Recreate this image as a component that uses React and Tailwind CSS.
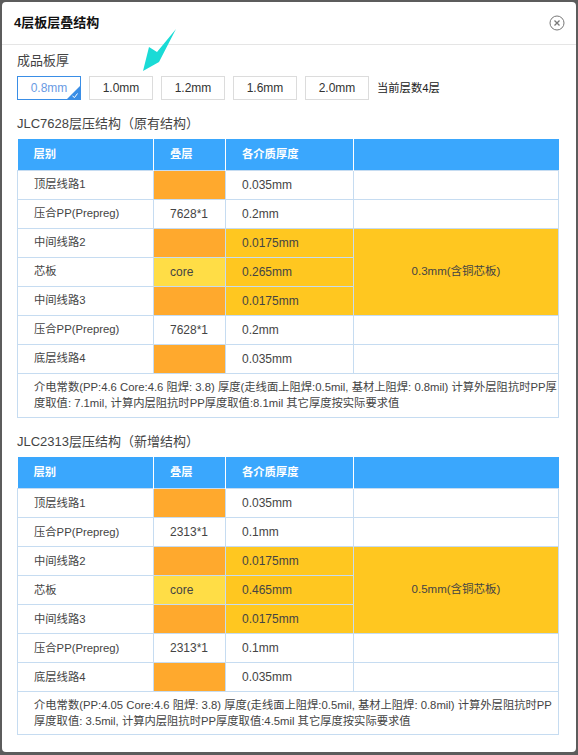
function Stack({ pp, core, total, thin, note, headHeight, notePadding }) {
  const label = "border border-[#c6dcf1] pl-[16px] h-[29px] p-0 text-[11.3px]";
  const td = "border border-[#c6dcf1] pl-[16px] h-[29px] p-0";
  const orange = "border border-[#c6dcf1] h-[29px] p-0 bg-[#ffa92d]";
  const gold = "border border-[#c6dcf1] pl-[16px] h-[29px] p-0 bg-[#ffc720]";
  return (
    <table className="w-[541px] table-fixed border-collapse text-[12px] text-[#444] ml-[17px]">
      <colgroup>
        <col className="w-[136px]" />
        <col className="w-[72px]" />
        <col className="w-[128px]" />
        <col className="w-[205px]" />
      </colgroup>
      <thead>
        <tr className={`bg-[#3aa7fd] text-white text-[11.3px] ${headHeight}`}>
          <th className="text-left pl-[16px] p-0 border-r border-white font-bold">层别</th>
          <th className="text-left pl-[16px] p-0 border-r border-white font-bold">叠层</th>
          <th className="text-left pl-[16px] p-0 border-r border-white font-bold">各介质厚度</th>
          <th className="p-0"></th>
        </tr>
      </thead>
      <tbody>
        <tr><td className={label}>顶层线路1</td><td className={orange}></td><td className={td}>0.035mm</td><td className={td}></td></tr>
        <tr><td className={label}>压合PP(Prepreg)</td><td className={td}>{pp}</td><td className={td}>{thin}</td><td className={td}></td></tr>
        <tr>
          <td className={label}>中间线路2</td><td className={orange}></td><td className={gold}>0.0175mm</td>
          <td rowSpan={3} className="border border-[#c6dcf1] p-0 bg-[#ffc720] text-center text-[11.5px]">{total}</td>
        </tr>
        <tr><td className={label}>芯板</td><td className={`${td} bg-[#ffdd46]`}>core</td><td className={gold}>{core}</td></tr>
        <tr><td className={label}>中间线路3</td><td className={orange}></td><td className={gold}>0.0175mm</td></tr>
        <tr><td className={label}>压合PP(Prepreg)</td><td className={td}>{pp}</td><td className={td}>{thin}</td><td className={td}></td></tr>
        <tr><td className={label}>底层线路4</td><td className={orange}></td><td className={td}>0.035mm</td><td className={td}></td></tr>
        <tr>
          <td colSpan={4} className={`border border-[#c6dcf1] pl-[16px] pr-0 pt-[5px] leading-[16px] text-[11.3px] ${notePadding}`}>{note}</td>
        </tr>
      </tbody>
    </table>
  );
}

function Thick({ label, active }) {
  return (
    <button className={`relative w-[64px] h-[24px] border text-[12px] bg-white overflow-hidden ${active ? "border-[#3a8ee6] text-[#6a9be3]" : "border-[#dcdcdc] text-[#333]"}`}>
      {label}
      {active && (
        <svg className="absolute right-0 bottom-0" width="13" height="13" viewBox="0 0 13 13">
          <polygon points="13,0 13,13 0,13" fill="#3a8ee6" />
          <path d="M5.5 10 L7.5 11.5 L10.5 7.5" stroke="#fff" strokeWidth="1" fill="none" />
        </svg>
      )}
    </button>
  );
}

export default function App() {
  return (
    <div className="w-[578px] h-[755px] bg-[#5c5c5c] pt-[2px] pl-[2px] overflow-hidden font-['Liberation_Sans','Noto_Sans_CJK_SC',sans-serif]">
      <div className="relative w-[574px] h-[750px] bg-white rounded-[4px] overflow-hidden">
        <div className="h-[43px] border-b border-[#e5e5e5] flex items-center justify-between pl-[12px] pr-[11px]">
          <span className="text-[13px] font-bold text-[#111]">4层板层叠结构</span>
          <svg width="16" height="16" viewBox="0 0 16 16" fill="none" stroke="#787878" strokeWidth="1">
            <circle cx="8" cy="8" r="7" />
            <path d="M5.5 5.5 L10.5 10.5 M10.5 5.5 L5.5 10.5" strokeWidth="1.3" />
          </svg>
        </div>
        <div className="text-[13px] leading-[18px] text-[#444] pl-[15px] pt-[7px]">成品板厚</div>
        <div className="flex items-center gap-[8px] pl-[15px] pt-[6px]">
          <Thick label="0.8mm" active />
          <Thick label="1.0mm" />
          <Thick label="1.2mm" />
          <Thick label="1.6mm" />
          <Thick label="2.0mm" />
          <span className="text-[11.3px] text-[#222]">当前层数4层</span>
        </div>
        <div className="-ml-[2px]">
          <div className="text-[13px] leading-[18px] text-[#444] pl-[17px] mt-[15px] mb-[6px]">JLC7628层压结构（原有结构）</div>
          <Stack pp="7628*1" core="0.265mm" thin="0.2mm" total="0.3mm(含铜芯板)" headHeight="h-[31px]" notePadding="pb-[6px]" note="介电常数(PP:4.6 Core:4.6 阻焊: 3.8) 厚度(走线面上阻焊:0.5mil, 基材上阻焊: 0.8mil) 计算外层阻抗时PP厚度取值: 7.1mil, 计算内层阻抗时PP厚度取值:8.1mil 其它厚度按实际要求值" />
          <div className="text-[13px] leading-[18px] text-[#444] pl-[17px] mt-[15px] mb-[6px]">JLC2313层压结构（新增结构）</div>
          <Stack pp="2313*1" core="0.465mm" thin="0.1mm" total="0.5mm(含铜芯板)" headHeight="h-[32px]" notePadding="pb-[5px]" note="介电常数(PP:4.05 Core:4.6 阻焊: 3.8) 厚度(走线面上阻焊:0.5mil, 基材上阻焊: 0.8mil) 计算外层阻抗时PP厚度取值: 3.5mil, 计算内层阻抗时PP厚度取值:4.5mil 其它厚度按实际要求值" />
        </div>
        <svg className="absolute left-[139px] top-[25px]" width="38" height="46" viewBox="0 0 38 46">
          <polygon points="2,44 8,20 16,25 35,2 18,35" fill="#1adbd6" />
        </svg>
      </div>
    </div>
  );
}
